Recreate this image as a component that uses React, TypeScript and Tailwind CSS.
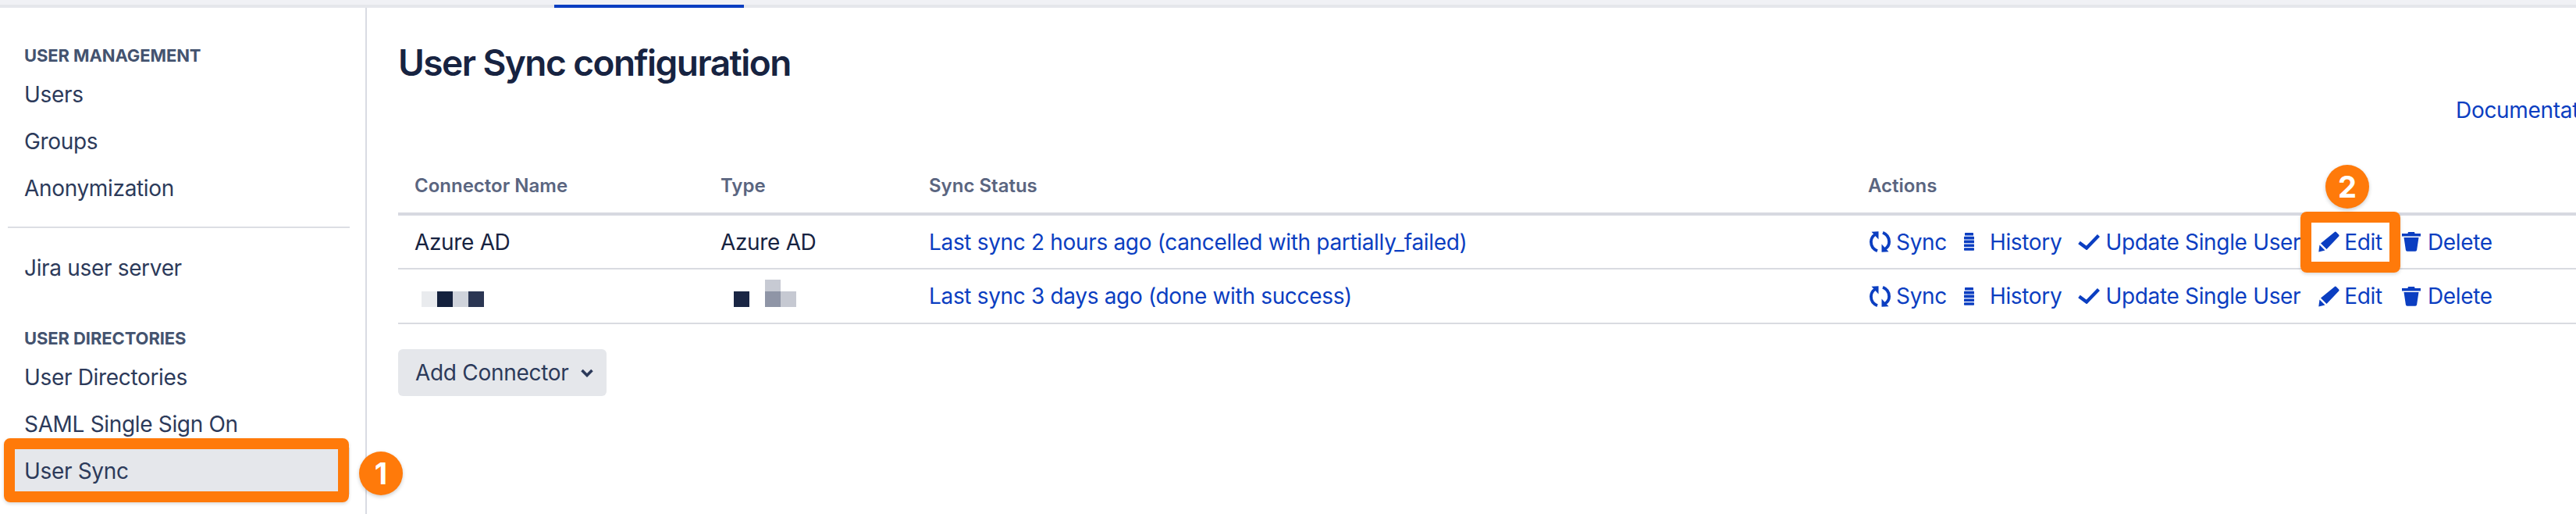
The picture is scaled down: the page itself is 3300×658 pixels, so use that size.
import { ReactNode } from 'react';

const BLUE = 'text-[#0b3ec1]';

function SyncIcon() {
  return (
    <svg viewBox="0 0 27 27" className="w-[27px] h-[27px] shrink-0">
      <g>
        <path d="M10 25.2C4.2 22.8 1.9 18 1.9 13.5C1.9 9.5 3.5 6.5 7.5 4" fill="none" stroke="currentColor" strokeWidth="3.8" />
        <path d="M2.5 0.8L11.5 0.2V10.5z" fill="currentColor" />
      </g>
      <g transform="rotate(180 13.5 13.5)">
        <path d="M10 25.2C4.2 22.8 1.9 18 1.9 13.5C1.9 9.5 3.5 6.5 7.5 4" fill="none" stroke="currentColor" strokeWidth="3.8" />
        <path d="M2.5 0.8L11.5 0.2V10.5z" fill="currentColor" />
      </g>
    </svg>
  );
}

function HistoryIcon() {
  return (
    <svg viewBox="0 0 13 23" className="w-[13px] h-[23px] shrink-0" fill="currentColor">
      <rect x="1" y="0" width="11" height="3.6" rx="0.5" />
      <rect x="0" y="4.8" width="13" height="3.6" rx="0.5" />
      <rect x="0" y="9.6" width="13" height="3.6" rx="0.5" />
      <rect x="0" y="14.4" width="13" height="3.6" rx="0.5" />
      <rect x="0" y="19.2" width="13" height="3.6" rx="0.8" />
    </svg>
  );
}

function CheckIcon() {
  return (
    <svg viewBox="0 0 28 20" className="w-[28px] h-[20px] shrink-0" fill="none" stroke="currentColor" strokeWidth="4.4">
      <path d="M1.5 10.5l9.5 7L26.5 1.5" />
    </svg>
  );
}

function PencilIcon() {
  return (
    <svg viewBox="0 0 27 27" className="w-[27px] h-[27px] shrink-0" fill="currentColor">
      <path d="M20.5 1.2a1.8 1.8 0 0 1 2.5 0l3 3a1.8 1.8 0 0 1 0 2.5L10.5 23 3 15.5z" />
      <path d="M1.5 17.5l7 7-8.2 2z" />
    </svg>
  );
}

function TrashIcon() {
  return (
    <svg viewBox="0 0 24 25" className="w-[24px] h-[25px] shrink-0" fill="currentColor">
      <path d="M8 0h8l0.6 2H24v3.6H0V2h7.4z" />
      <path d="M2.5 7h19l-2.4 16a2 2 0 0 1-2 1.8H6.9a2 2 0 0 1-2-1.8z" />
    </svg>
  );
}

function ActionLink({ icon, label, gap, className }: { icon: ReactNode; label: string; gap: string; className: string }) {
  return (
    <a className={`flex items-center ${gap} ${className}`}>
      {icon}
      <span>{label}</span>
    </a>
  );
}

function Actions() {
  return (
    <div className={`flex items-center ${BLUE}`}>
      <ActionLink icon={<SyncIcon />} label="Sync" gap="gap-[7px]" className="ml-[2px]" />
      <ActionLink icon={<HistoryIcon />} label="History" gap="gap-[20px]" className="ml-[22px]" />
      <ActionLink icon={<CheckIcon />} label="Update Single User" gap="gap-[7px]" className="ml-[21px]" />
      <ActionLink icon={<PencilIcon />} label="Edit" gap="gap-[6px]" className="ml-[23px]" />
      <ActionLink icon={<TrashIcon />} label="Delete" gap="gap-[9px]" className="ml-[25px]" />
    </div>
  );
}

function NavItem({ label, active }: { label: string; active?: boolean }) {
  return (
    <a className={`flex items-center h-[60px] pl-[21px] text-[28px] tracking-[-0.33px] text-[#2c3a5a] ${active ? 'bg-[#e5e7eb]' : ''}`}>
      {label}
    </a>
  );
}

function NavHeading({ label }: { label: string }) {
  return (
    <div className="h-[32px] mb-[4px] pl-[21px] flex items-center text-[22px] font-bold tracking-[-0.1px] text-[#44536f]">
      {label}
    </div>
  );
}

function Badge({ n, className }: { n: number; className: string }) {
  return (
    <div className={`absolute w-[56px] h-[56px] rounded-full bg-[#ff7a0a] text-white text-[38px] font-bold flex items-center justify-center shadow-[0_2px_5px_rgba(0,0,0,0.2)] ${className}`}>
      {n}
    </div>
  );
}

const rows = [
  { name: 'Azure AD', type: 'Azure AD', status: 'Last sync 2 hours ago (cancelled with partially_failed)' },
  { name: '', type: '', status: 'Last sync 3 days ago (done with success)' },
];

export default function App() {
  return (
    <div className="relative h-[658px] w-[3300px] overflow-hidden bg-white font-['Inter',sans-serif] antialiased">
      <div className="h-[6px] bg-[#f0f1f5]" />
      <div className="h-[4px] bg-[#e5e7eb] pl-[710px]">
        <div className="h-full w-[243px] bg-[#0b3ec1]" />
      </div>

      <div className="flex h-[648px]">
        <aside className="w-[470px] shrink-0 border-r-2 border-[#d9dbe3] pt-[45px] pl-[10px] pr-[20px]">
          <NavHeading label="USER MANAGEMENT" />
          <NavItem label="Users" />
          <NavItem label="Groups" />
          <NavItem label="Anonymization" />
          <div className="h-[2px] bg-[#dcdee4] mt-[19px] mb-[21px]" />
          <NavItem label="Jira user server" />
          <div className="mt-[44px]">
            <NavHeading label="USER DIRECTORIES" />
          </div>
          <NavItem label="User Directories" />
          <NavItem label="SAML Single Sign On" />
          <NavItem label="User Sync" active />
        </aside>

        <main className="flex-1 min-w-0 pt-[42px] pl-[40px]">
          <h1 className="h-[56px] leading-[56px] text-[46px] font-semibold tracking-[-1.55px] text-[#172341]">User Sync configuration</h1>
          <div className="mt-[13px] h-[40px] leading-[40px] pl-[2636px] whitespace-nowrap text-[28px] tracking-[-0.3px] text-[#0b3ec1]">
            <a>Documentation</a>
          </div>

          <table className="mt-[43px] w-full table-fixed border-collapse text-[28px] tracking-[-0.33px] text-[#172341]">
            <thead>
              <tr className="h-[70px] border-b-4 border-[#d7d9e1] text-left text-[24px] tracking-normal font-semibold text-[#5a6580]">
                <th className="w-[413px] pl-[21px] font-semibold">Connector Name</th>
                <th className="w-[267px] font-semibold">Type</th>
                <th className="w-[1203px] font-semibold">Sync Status</th>
                <th className="font-semibold">Actions</th>
              </tr>
            </thead>
            <tbody>
              {rows.map((row) => (
                <tr key={row.status} className="h-[70px] border-b-2 border-[#d9dbe1]">
                  <td className="pl-[21px]">
                    {row.name || (
                      <div className="flex ml-[9px] mt-[8px]">
                        <div className="w-[20px] h-[20px] bg-[#e9ebee]" />
                        <div className="w-[20px] h-[20px] bg-[#14213d]" />
                        <div className="w-[20px] h-[20px] bg-[#cfd3db]" />
                        <div className="w-[20px] h-[20px] bg-[#2b3653]" />
                      </div>
                    )}
                  </td>
                  <td>
                    {row.type || (
                      <div className="flex items-end ml-[17px] mt-[-7px]">
                        <div className="w-[20px] h-[20px] bg-[#1a2644]" />
                        <div className="w-[20px] h-[35px] ml-[20px] flex flex-col">
                          <div className="h-[15px] bg-[#c7cad3]" />
                          <div className="h-[20px] bg-[#8f95a6]" />
                        </div>
                        <div className="w-[20px] h-[20px] bg-[#c6c9d2]" />
                      </div>
                    )}
                  </td>
                  <td className={BLUE}>{row.status}</td>
                  <td className="whitespace-nowrap"><Actions /></td>
                </tr>
              ))}
            </tbody>
          </table>

          <button className="mt-[32px] w-[267px] h-[60px] rounded-[6px] bg-[#e5e7eb] pl-[22px] flex items-center text-[28px] tracking-[-0.3px] text-[#2c3a5a]">
            Add Connector
            <svg viewBox="0 0 16 11" className="w-[16px] h-[11px] ml-[16px]" fill="none" stroke="currentColor" strokeWidth="3.6">
              <path d="M1.5 2l6.5 6.5L14.5 2" />
            </svg>
          </button>
        </main>
      </div>

      {/* annotation overlays */}
      <div className="absolute left-[5px] top-[561px] w-[442px] h-[82px] border-[14px] border-[#ff7a0a] rounded-[8px] shadow-[0_2px_4px_rgba(0,0,0,0.15)]" />
      <Badge n={1} className="left-[460px] top-[578px]" />
      <div className="absolute left-[2947px] top-[271px] w-[128px] h-[78px] border-[14px] border-[#ff7a0a] rounded-[8px] shadow-[0_2px_4px_rgba(0,0,0,0.15)]" />
      <Badge n={2} className="left-[2979px] top-[211px]" />
    </div>
  );
}
